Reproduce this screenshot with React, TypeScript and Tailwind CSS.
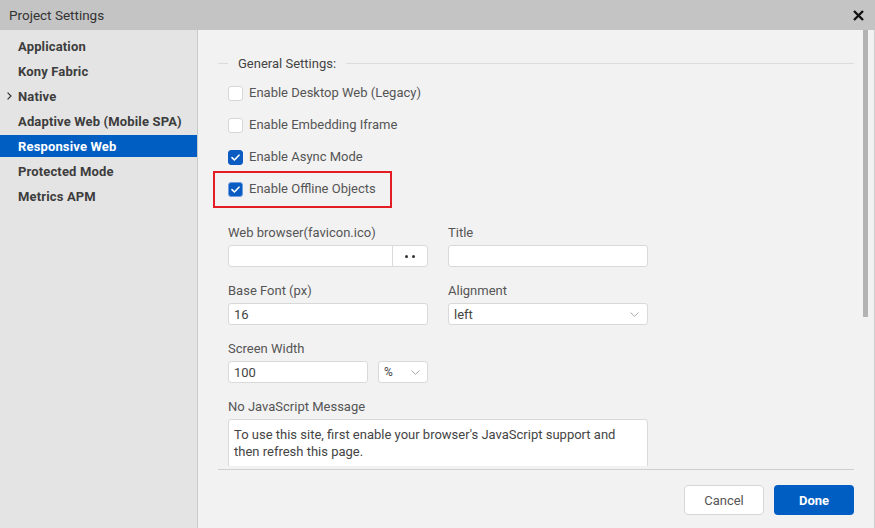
import React from "react";

const font = { fontFamily: "Roboto, 'Liberation Sans', sans-serif" };

function Check({ checked, focus }: { checked?: boolean; focus?: boolean }) {
  if (!checked)
    return <div className="w-[15px] h-[15px] rounded-[3px] bg-white border border-[#d6d6d6] shrink-0" />;
  return (
    <div
      className={`w-[15px] h-[15px] rounded-[3px] bg-[#0a5bc2] shrink-0 flex items-center justify-center border ${
        focus ? "border-[#6f9fe0]" : "border-[#0a5bc2]"
      }`}
    >
      <svg width="9" height="7" viewBox="0 0 9 7" fill="none">
        <path d="M1 3.6 L3.4 6 L8 1.2" stroke="white" strokeWidth="1.6" strokeLinecap="round" strokeLinejoin="round" />
      </svg>
    </div>
  );
}

function Chevron() {
  return (
    <svg width="9" height="5" viewBox="0 0 9 5" fill="none">
      <path d="M0.5 0.5 L4.5 4.3 L8.5 0.5" stroke="#a8a8a8" strokeWidth="1" />
    </svg>
  );
}

export default function App() {
  const items = [
    "Application",
    "Kony Fabric",
    "Native",
    "Adaptive Web (Mobile SPA)",
    "Responsive Web",
    "Protected Mode",
    "Metrics APM",
  ];
  const checks: { label: string; checked?: boolean; focus?: boolean }[] = [
    { label: "Enable Desktop Web (Legacy)" },
    { label: "Enable Embedding Iframe" },
    { label: "Enable Async Mode", checked: true },
    { label: "Enable Offline Objects", checked: true, focus: true },
  ];
  return (
    <div style={font} className="w-[875px] h-[528px] flex flex-col overflow-hidden bg-[#f2f2f2]">
      <div className="h-[30px] shrink-0 bg-[#c4c4c4] flex items-center justify-between pl-[9px] pr-[11px]">
        <span className="text-[13.5px] text-[#333]">Project Settings</span>
        <svg width="11" height="11" viewBox="0 0 11 11">
          <path d="M1 1 L10 10 M10 1 L1 10" stroke="#111" strokeWidth="2.4" />
        </svg>
      </div>
      <div className="flex flex-1 min-h-0">
        <div className="w-[198px] shrink-0 bg-[#e4e4e4] border-r border-[#cacaca] pt-[5px] flex flex-col gap-[3px]">
          {items.map((it) => {
            const sel = it === "Responsive Web";
            return (
              <div
                key={it}
                className={`h-[22px] flex items-center pt-[1px] pl-[18px] relative text-[13px] tracking-[0.15px] font-bold ${
                  sel ? "bg-[#005ec2] text-white" : "text-[#3d3d3d]"
                }`}
              >
                {it === "Native" && (
                  <svg className="absolute left-[7px] top-[7px]" width="5" height="8" viewBox="0 0 5 8">
                    <path d="M0.6 0.6 L4 4 L0.6 7.4" stroke="#333" strokeWidth="1.2" fill="none" />
                  </svg>
                )}
                {it}
              </div>
            );
          })}
        </div>
        <div className="flex-1 flex flex-col border-r border-[#cfcfcf] relative">
          <div className="absolute right-[6px] top-0 w-[5px] h-[287px] bg-[#b3b3b3]" />
          <div className="h-[436px] overflow-hidden px-[20px] pt-[26px]">
            <div className="h-[16px] flex items-center">
              <div className="w-[10px] h-px bg-[#dcdcdc] -mt-[2px]" />
              <span className="px-[10px] text-[13px] text-[#444] leading-[16px]">General Settings:</span>
              <div className="flex-1 h-px bg-[#dcdcdc] -mt-[2px]" />
            </div>
            <div className="mt-[5px] pl-[10px]">
              {checks.map((c) => (
                <div key={c.label} className="h-[32px] flex items-center gap-[6px] relative">
                  <Check checked={c.checked} focus={c.focus} />
                  <span className="text-[13px] text-[#555]">{c.label}</span>
                  {c.focus && (
                    <div className="absolute left-[-15px] top-[-2px] w-[179px] h-[37px] border-2 border-[#e41c23]" />
                  )}
                </div>
              ))}
            </div>
            <div className="mt-[20px] pl-[10px] flex flex-col gap-[16px] text-[13px] text-[#555]">
              <div className="flex gap-[20px]">
                <div className="w-[200px]">
                  <div className="h-[16px] leading-[16px]">Web browser(favicon.ico)</div>
                  <div className="mt-[4px] h-[22px] bg-white border border-[#d9d9d9] rounded-[3px] flex">
                    <div className="flex-1" />
                    <div className="w-[35px] border-l border-[#d9d9d9] flex items-center justify-center gap-[4px]">
                      <div className="w-[3px] h-[3px] rounded-full bg-[#333]" />
                      <div className="w-[3px] h-[3px] rounded-full bg-[#333]" />
                    </div>
                  </div>
                </div>
                <div className="w-[200px]">
                  <div className="h-[16px] leading-[16px]">Title</div>
                  <div className="mt-[4px] h-[22px] bg-white border border-[#d9d9d9] rounded-[3px]" />
                </div>
              </div>
              <div className="flex gap-[20px]">
                <div className="w-[200px]">
                  <div className="h-[16px] leading-[16px]">Base Font (px)</div>
                  <div className="mt-[4px] h-[22px] bg-white border border-[#d9d9d9] rounded-[3px] flex items-center pt-[1px] px-[5px] text-[#444]">
                    16
                  </div>
                </div>
                <div className="w-[200px]">
                  <div className="h-[16px] leading-[16px]">Alignment</div>
                  <div className="mt-[4px] h-[22px] bg-white border border-[#d9d9d9] rounded-[3px] flex items-center justify-between pl-[5px] pr-[8px] text-[#444]">
                    <span className="pt-[1px]">left</span>
                    <Chevron />
                  </div>
                </div>
              </div>
              <div className="flex">
                <div className="w-[200px]">
                  <div className="h-[16px] leading-[16px]">Screen Width</div>
                  <div className="mt-[4px] flex gap-[10px]">
                    <div className="w-[140px] h-[22px] bg-white border border-[#d9d9d9] rounded-[3px] flex items-center pt-[1px] px-[5px] text-[#444]">
                      100
                    </div>
                    <div className="w-[50px] h-[22px] bg-white border border-[#d9d9d9] rounded-[3px] flex items-center justify-between pl-[5px] pr-[7px] text-[#444] text-[12px]">
                      <span>%</span>
                      <Chevron />
                    </div>
                  </div>
                </div>
              </div>
              <div className="w-[420px]">
                <div className="h-[16px] leading-[16px]">No JavaScript Message</div>
                <div className="mt-[4px] h-[60px] bg-white border border-[#d9d9d9] rounded-[3px] px-[5px] pt-[6px] leading-[17px] text-[#444]">
                  To use this site, first enable your browser's JavaScript support and then refresh this page.
                </div>
              </div>
            </div>
          </div>
          <div className="px-[20px] pt-[3px] flex-1">
            <div className="border-t border-[#cfcfcf] pt-[15px] flex justify-end gap-[10px]">
              <button className="w-[80px] h-[30px] pt-[1px] rounded-[4px] bg-white border border-[#d6d6d6] text-[13px] text-[#555]">
                Cancel
              </button>
              <button className="w-[80px] h-[30px] pt-[1px] rounded-[4px] bg-[#005ec2] text-[13px] font-bold text-white">
                Done
              </button>
            </div>
          </div>
        </div>
      </div>
    </div>
  );
}
